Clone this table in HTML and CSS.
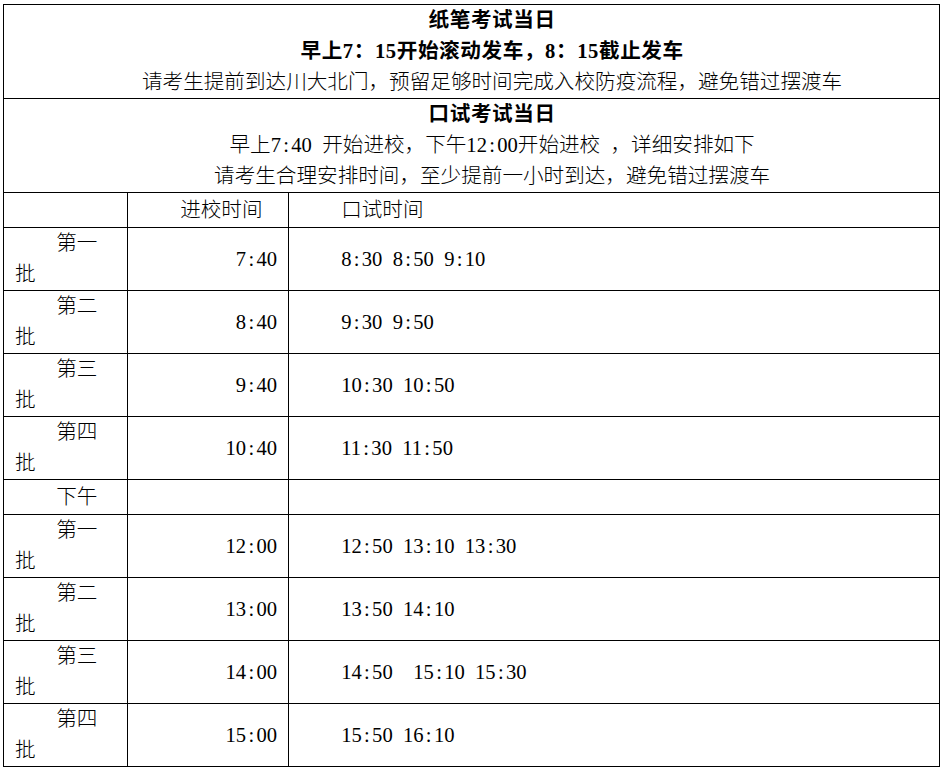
FILE: index.html
```html
<!DOCTYPE html>
<html lang="zh-CN">
<head>
<meta charset="utf-8">
<title>考试当日安排</title>
<link rel="stylesheet" href="styles.css">
</head>
<body>
<table class="sched">
  <colgroup><col class="col-batch"><col class="col-enter"><col class="col-oral"></colgroup>
  <tr class="sec">
    <td colspan="3">
      <p class="b">纸笔考试当日</p>
      <p class="b">早上7：15开始滚动发车，8：15截止发车</p>
      <p>请考生提前到达川大北门，预留足够时间完成入校防疫流程，避免错过摆渡车</p>
    </td>
  </tr>
  <tr class="sec">
    <td colspan="3">
      <p class="b">口试考试当日</p>
      <p class="ws">早上7<span class="c">:</span>40 开始进校，下午12<span class="c">:</span>00开始进校 ，详细安排如下</p>
      <p>请考生合理安排时间，至少提前一小时到达，避免错过摆渡车</p>
    </td>
  </tr>
  <tr class="short">
    <td></td>
    <td class="ind">进校时间</td>
    <td class="ind">口试时间</td>
  </tr>
  <tr>
    <td class="batch">第一批</td>
    <td class="enter">7<span class="c">:</span>40</td>
    <td class="ind tm">8<span class="c">:</span>30 8<span class="c">:</span>50 9<span class="c">:</span>10</td>
  </tr>
  <tr>
    <td class="batch">第二批</td>
    <td class="enter">8<span class="c">:</span>40</td>
    <td class="ind tm">9<span class="c">:</span>30 9<span class="c">:</span>50</td>
  </tr>
  <tr>
    <td class="batch">第三批</td>
    <td class="enter">9<span class="c">:</span>40</td>
    <td class="ind tm">10<span class="c">:</span>30 10<span class="c">:</span>50</td>
  </tr>
  <tr>
    <td class="batch">第四批</td>
    <td class="enter">10<span class="c">:</span>40</td>
    <td class="ind tm">11<span class="c">:</span>30 11<span class="c">:</span>50</td>
  </tr>
  <tr class="short">
    <td class="batch">下午</td>
    <td></td>
    <td></td>
  </tr>
  <tr>
    <td class="batch">第一批</td>
    <td class="enter">12<span class="c">:</span>00</td>
    <td class="ind tm">12<span class="c">:</span>50 13<span class="c">:</span>10 13<span class="c">:</span>30</td>
  </tr>
  <tr>
    <td class="batch">第二批</td>
    <td class="enter">13<span class="c">:</span>00</td>
    <td class="ind tm">13<span class="c">:</span>50 14<span class="c">:</span>10</td>
  </tr>
  <tr>
    <td class="batch">第三批</td>
    <td class="enter">14<span class="c">:</span>00</td>
    <td class="ind tm">14<span class="c">:</span>50  15<span class="c">:</span>10 15<span class="c">:</span>30</td>
  </tr>
  <tr>
    <td class="batch">第四批</td>
    <td class="enter">15<span class="c">:</span>00</td>
    <td class="ind tm">15<span class="c">:</span>50 16<span class="c">:</span>10</td>
  </tr>
</table>
</body>
</html>
```
FILE: styles.css
```css
html, body {
  background: #fff;
}
body {
  margin: 4px 0 0 3px;
  font-family: "Liberation Serif", "Noto Sans CJK SC", serif;
  font-size: 20.6px;
  font-weight: 300;
  color: #000;
}
.sched {
  border-collapse: collapse;
  table-layout: fixed;
  width: 936px;
}
.col-batch { width: 124px; }
.col-enter { width: 161px; }
.col-oral { width: 651px; }
.sched td {
  border: 1px solid #000;
  padding: 0 11px;
  line-height: 31px;
  vertical-align: middle;
}
.sec td {
  text-align: center;
  padding: 0;
}
.sec p {
  margin: 0;
  text-indent: 2em;
}
.b {
  font-weight: bold;
  letter-spacing: 0.6px;
}
.ws { word-spacing: 0.25em; }
.c {
  display: inline-block;
  width: 0.5em;
  text-align: center;
  text-indent: 0;
}
.short { height: 35px; }
.batch {
  text-indent: 2em;
  padding-right: 20px !important;
}
.enter { text-align: right; }
.ind { text-indent: 2em; }
.tm {
  white-space: pre;
  word-spacing: 0.25em;
}
```
